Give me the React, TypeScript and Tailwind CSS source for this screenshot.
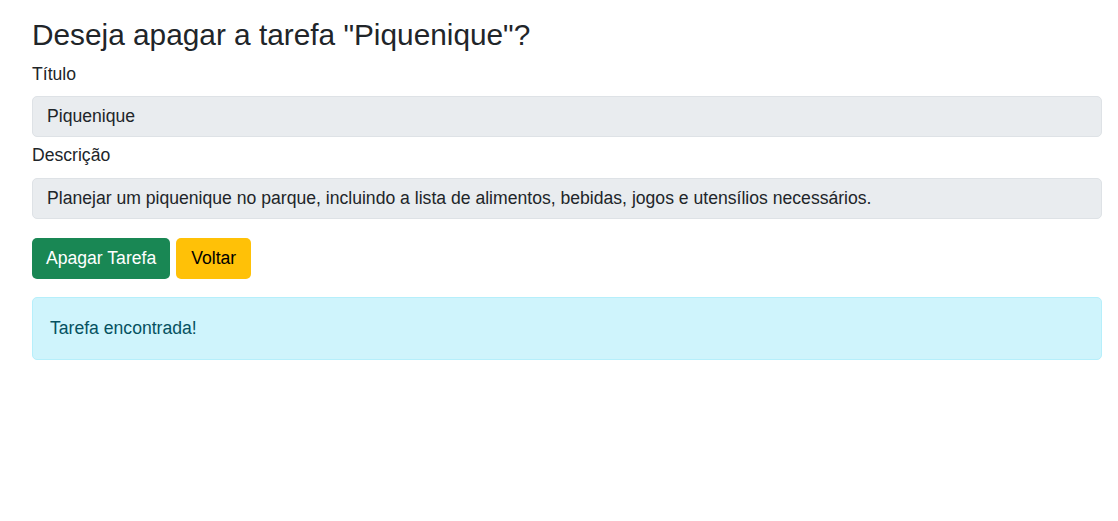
export default function App() {
  return (
    <div className="w-[1118px] h-[521px] bg-white text-[#212529]" style={{ fontFamily: '"Liberation Sans", Arial, sans-serif' }}>
      <div className="ml-[32px] w-[1070px] pt-[17px]">
        <h3 className="text-[29.8px] leading-[1.2] font-normal mb-[8px]">Deseja apagar a tarefa "Piquenique"?</h3>
        <div className="text-[17.6px] leading-[1.5]">
          <label className="block mb-[9px]">Título</label>
          <div className="h-[41px] bg-[#e9ecef] border border-[#dee2e6] rounded-[5px] px-[14px] flex items-center">Piquenique</div>
          <label className="block mt-[5px] mb-[9px]">Descrição</label>
          <div className="h-[41px] bg-[#e9ecef] border border-[#dee2e6] rounded-[5px] px-[14px] flex items-center">Planejar um piquenique no parque, incluindo a lista de alimentos, bebidas, jogos e utensílios necessários.</div>
          <div className="flex gap-[6px] mt-[19px]">
            <button className="h-[41px] px-[14px] bg-[#198754] text-white rounded-[5px]">Apagar Tarefa</button>
            <button className="h-[41px] px-[15px] bg-[#ffc107] text-black rounded-[5px]">Voltar</button>
          </div>
          <div className="mt-[18px] h-[63px] bg-[#cff4fc] border border-[#b6effb] rounded-[5px] px-[17px] flex items-center text-[#055160]">Tarefa encontrada!</div>
        </div>
      </div>
    </div>
  );
}
